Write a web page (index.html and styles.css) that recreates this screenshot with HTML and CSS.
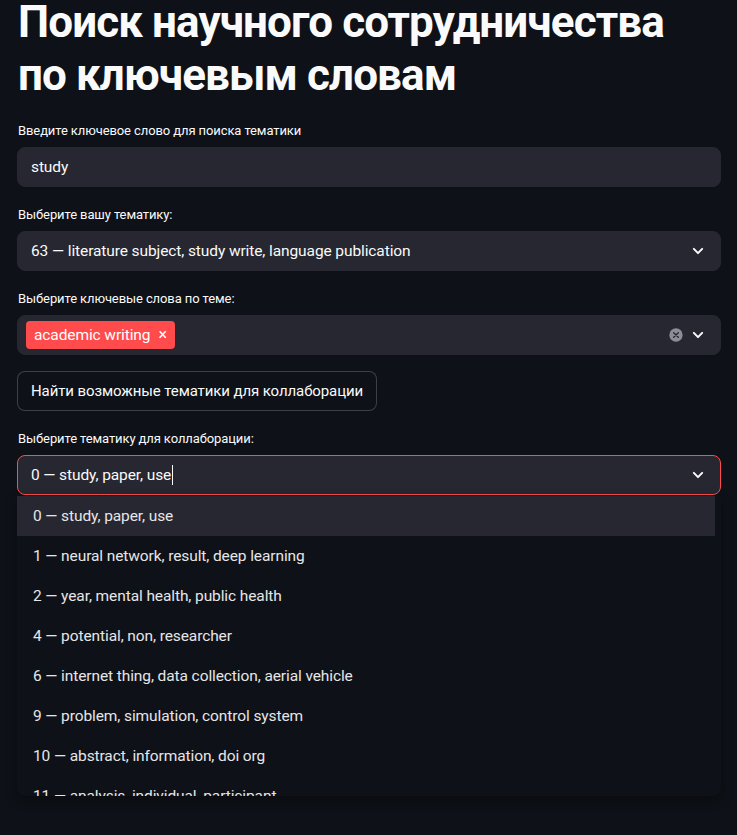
FILE: index.html
```html
<!DOCTYPE html>
<html lang="ru">
<head>
<meta charset="utf-8">
<link rel="stylesheet" href="styles.css">
</head>
<body>
<main class="main">
  <h1 class="title">Поиск научного сотрудничества по ключевым словам</h1>

  <div class="widget">
    <label class="label">Введите ключевое слово для поиска тематики</label>
    <div class="field"><span class="value">study</span></div>
  </div>

  <div class="widget">
    <label class="label">Выберите вашу тематику:</label>
    <div class="field select">
      <span class="value">63 — literature subject, study write, language publication</span>
      <svg class="chev" viewBox="0 0 24 24" width="20" height="20"><path d="M7 9.5l5 5 5-5" fill="none" stroke="#fafafa" stroke-width="2.4" stroke-linecap="round" stroke-linejoin="round"/></svg>
    </div>
  </div>

  <div class="widget">
    <label class="label">Выберите ключевые слова по теме:</label>
    <div class="field select multi">
      <span class="tag">academic writing <span class="tag-x">×</span></span>
      <span class="spacer"></span>
      <svg class="clear" viewBox="0 0 24 24" width="16" height="16"><circle cx="12" cy="12" r="10" fill="#8b8d98"/><path d="M8.5 8.5l7 7M15.5 8.5l-7 7" stroke="#262730" stroke-width="2" stroke-linecap="round"/></svg>
      <svg class="chev" viewBox="0 0 24 24" width="20" height="20"><path d="M7 9.5l5 5 5-5" fill="none" stroke="#fafafa" stroke-width="2.4" stroke-linecap="round" stroke-linejoin="round"/></svg>
    </div>
  </div>

  <div class="widget">
    <button class="btn">Найти возможные тематики для коллаборации</button>
  </div>

  <div class="widget">
    <label class="label">Выберите тематику для коллаборации:</label>
    <div class="dropdown">
      <div class="field select focused">
        <span class="value">0 — study, paper, use<span class="caret"></span></span>
        <svg class="chev" viewBox="0 0 24 24" width="20" height="20"><path d="M7 9.5l5 5 5-5" fill="none" stroke="#fafafa" stroke-width="2.4" stroke-linecap="round" stroke-linejoin="round"/></svg>
      </div>
      <ul class="menu">
        <li class="item active">0 — study, paper, use</li>
        <li class="item">1 — neural network, result, deep learning</li>
        <li class="item">2 — year, mental health, public health</li>
        <li class="item">4 — potential, non, researcher</li>
        <li class="item">6 — internet thing, data collection, aerial vehicle</li>
        <li class="item">9 — problem, simulation, control system</li>
        <li class="item">10 — abstract, information, doi org</li>
        <li class="item">11 — analysis, individual, participant</li>
      </ul>
    </div>
  </div>
</main>
</body>
</html>
```

FILE: styles.css
```css
html, body {
  margin: 0;
  padding: 0;
  background: #0e1117;
  height: 100%;
  overflow: hidden;
}
body {
  font-family: "Roboto", "Liberation Sans", sans-serif;
  color: #fafafa;
}
.main {
  display: flex;
  flex-direction: column;
  gap: 16px;
  padding: 0 16px 0 17px;
}
.title {
  margin: -4px 0 0 0;
  padding: 0 0 1px 1px;
  font-size: 44px;
  font-weight: 700;
  line-height: 52.8px;
  letter-spacing: -0.9px;
}
.widget {
  display: flex;
  flex-direction: column;
  gap: 4px;
}
.label {
  font-size: 13px;
  letter-spacing: -0.1px;
  line-height: 24px;
  height: 24px;
  padding-left: 1px;
}
.field {
  height: 40px;
  box-sizing: border-box;
  background: #262730;
  border-radius: 8px;
  border: 1px solid #262730;
  display: flex;
  align-items: center;
  padding: 0 12px 0 13px;
  font-size: 15.5px;
  letter-spacing: -0.1px;
}
.value {
  display: flex;
  align-items: center;
}
.select {
  justify-content: space-between;
}
.chev {
  flex: none;
}
.multi {
  padding-left: 8px;
  gap: 0;
}
.spacer { flex: 1; }
.tag {
  background: #ff4b4b;
  border-radius: 4px;
  height: 28px;
  display: flex;
  align-items: center;
  padding: 0 8px 0 8px;
  color: #fff;
}
.tag-x {
  margin-left: 8px;
  font-size: 16px;
}
.clear {
  margin-right: 4px;
}
.btn {
  align-self: flex-start;
  height: 40px;
  box-sizing: border-box;
  background: #0e1117;
  border: 1px solid rgba(250, 250, 250, 0.2);
  border-radius: 8px;
  color: #fafafa;
  font-family: inherit;
  font-size: 15px;
  letter-spacing: -0.1px;
  padding: 0 13px;
}
.focused {
  border-color: #ff4b4b;
}
.caret {
  display: inline-block;
  width: 1px;
  height: 20px;
  background: #fafafa;
  margin-left: 1px;
}
.dropdown {
  display: flex;
  flex-direction: column;
  gap: 1px;
}
.menu {
  list-style: none;
  margin: 0;
  padding: 0 6px 0 0;
  height: 300px;
  overflow: hidden;
  background: #0e1117;
  border-radius: 0 0 8px 8px;
  box-shadow: 0 4px 12px rgba(0, 0, 0, 0.35);
}
.item {
  height: 40px;
  line-height: 40px;
  padding-left: 16px;
  font-size: 15.5px;
  letter-spacing: -0.1px;
  color: #e6e6e8;
}
.item.active {
  background: #262730;
}
```
